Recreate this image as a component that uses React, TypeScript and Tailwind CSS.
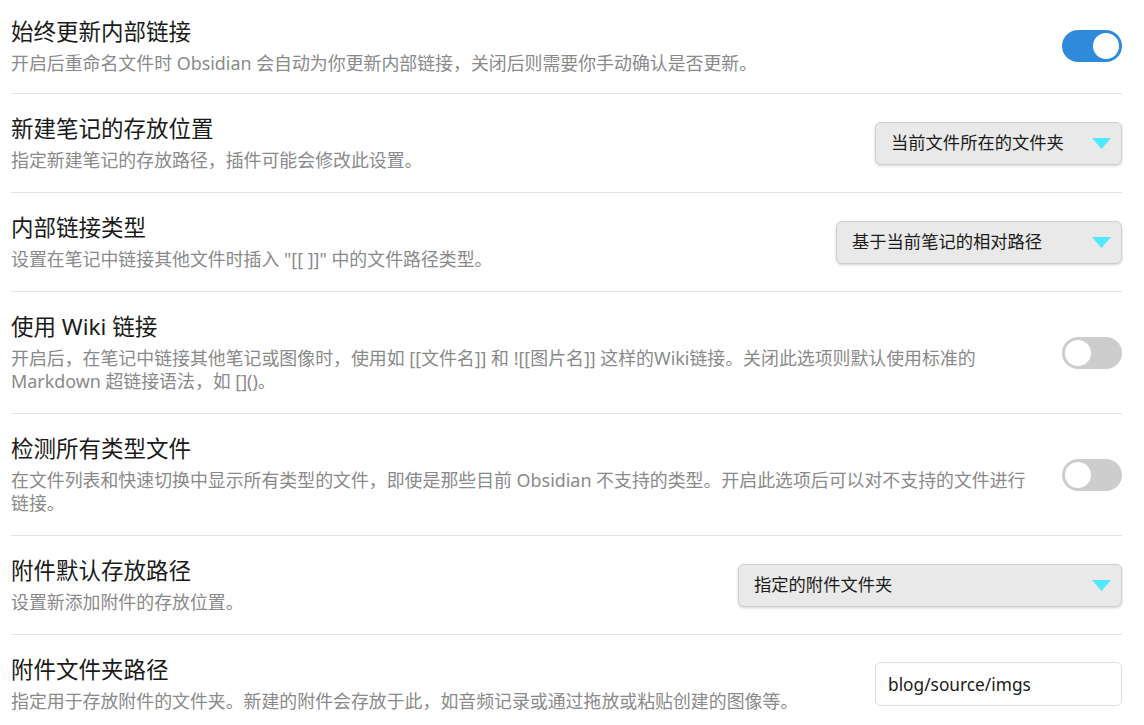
import { ReactNode } from "react";

type Row = {
    title: string;
    desc: ReactNode;
    control: ReactNode;
    first?: boolean;
};

const Toggle = ({ on }: { on: boolean }) => (
    <div
        className={
            on
                ? "w-[60px] h-[32px] shrink-0 rounded-full bg-[#2e8bdc] p-[3px] flex justify-end"
                : "w-[60px] h-[32px] shrink-0 rounded-full bg-[#cdcdcd] p-[3px] flex justify-start"
        }
    >
        <div className="w-[26px] h-[26px] rounded-full bg-white" />
    </div>
);

const Select = ({ value, width }: { value: string; width: string }) => (
    <div
        className={`${width} h-[43px] shrink-0 rounded-[6px] border border-[#cfcfcf] bg-[#e9e9e9] shadow-[0_1px_3px_rgba(0,0,0,0.18)] flex items-center justify-between pl-[15px] pr-[10px] text-[17.3px] text-[#1b1b1b]`}
    >
        <span>{value}</span>
        <svg width="19" height="11" viewBox="0 0 19 11">
            <polygon points="0,0 19,0 9.5,11" fill="#4fe9fb" />
        </svg>
    </div>
);

const rows: Row[] = [
    {
        title: "始终更新内部链接",
        desc: "开启后重命名文件时 Obsidian 会自动为你更新内部链接，关闭后则需要你手动确认是否更新。",
        control: <Toggle on />,
        first: true,
    },
    {
        title: "新建笔记的存放位置",
        desc: "指定新建笔记的存放路径，插件可能会修改此设置。",
        control: <Select value="当前文件所在的文件夹" width="w-[247px]" />,
    },
    {
        title: "内部链接类型",
        desc: '设置在笔记中链接其他文件时插入 "[[ ]]" 中的文件路径类型。',
        control: <Select value="基于当前笔记的相对路径" width="w-[286px]" />,
    },
    {
        title: "使用 Wiki 链接",
        desc: "开启后，在笔记中链接其他笔记或图像时，使用如 [[文件名]] 和 ![[图片名]] 这样的Wiki链接。关闭此选项则默认使用标准的 Markdown 超链接语法，如 []()。",
        control: <Toggle on={false} />,
    },
    {
        title: "检测所有类型文件",
        desc: "在文件列表和快速切换中显示所有类型的文件，即使是那些目前 Obsidian 不支持的类型。开启此选项后可以对不支持的文件进行链接。",
        control: <Toggle on={false} />,
    },
    {
        title: "附件默认存放路径",
        desc: "设置新添加附件的存放位置。",
        control: <Select value="指定的附件文件夹" width="w-[384px]" />,
    },
    {
        title: "附件文件夹路径",
        desc: "指定用于存放附件的文件夹。新建的附件会存放于此，如音频记录或通过拖放或粘贴创建的图像等。",
        control: (
            <input
                className="w-[247px] h-[44px] shrink-0 rounded-[6px] border border-[#dcdcdc] bg-white px-[12px] text-[17.3px] text-[#1b1b1b] outline-none"
                defaultValue="blog/source/imgs"
            />
        ),
    },
];

const App = () => {
    return (
        <div className="w-[1144px] h-[725px] overflow-hidden bg-white font-['Noto_Sans','Noto_Sans_CJK_SC',sans-serif]">
            <div className="pl-[11px] pr-[22px]">
                {rows.map((r, i) => (
                    <div
                        key={i}
                        className={
                            (r.first ? "pt-[17px] pb-[18px]" : "pt-[20px] pb-[20px] border-t border-[#e3e3e3]") +
                            " flex items-center justify-between gap-5"
                        }
                    >
                        <div className="flex-1 min-w-0">
                            <div className="text-[22.5px] leading-[30px] text-[#1a1a1a]">{r.title}</div>
                            <div className="mt-[5px] text-[17.9px] leading-[23px] text-[#8a8a8a]">{r.desc}</div>
                        </div>
                        {r.control}
                    </div>
                ))}
            </div>
        </div>
    );
};

export default App;
